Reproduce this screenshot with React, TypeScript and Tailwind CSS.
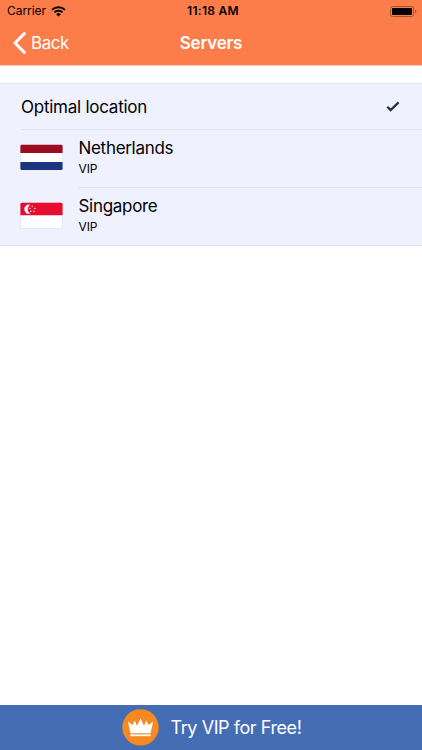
import React from 'react';

type ServerRowProps = {
    name: string;
    plan: string;
    flag: React.ReactNode;
    last?: boolean;
};

const StatusBar = () => (
    <div className="grid h-[22px] grid-cols-3 items-center pl-[7px] pr-[5px] text-black">
        <div className="flex items-center gap-[5px]">
            <span className="text-[12px] leading-[22px] tracking-[-0.05px]">Carrier</span>
            <svg width="15" height="11" viewBox="0 0 15 11">
                <path d="M7.5 10.6 5.2 8.2a3.3 3.3 0 0 1 4.6 0Z" fill="#000" />
                <path d="M3.4 6.4a5.9 5.9 0 0 1 8.2 0" fill="none" stroke="#000" strokeWidth="1.8" />
                <path d="M1 3.9a9.3 9.3 0 0 1 13 0" fill="none" stroke="#000" strokeWidth="1.8" />
            </svg>
        </div>
        <span className="pl-[2px] text-center text-[12px] font-semibold leading-[22px] tracking-[0.3px]">11:18 AM</span>
        <svg className="justify-self-end" width="27" height="11" viewBox="0 0 27 11">
            <rect x="0.5" y="0.5" width="23" height="10" rx="2" fill="none" stroke="#a8502f" />
            <rect x="2" y="2" width="20" height="7" rx="0.7" fill="#000" />
            <path d="M25 3.7q1.5.5 1.5 1.8T25 7.3Z" fill="#a8502f" />
        </svg>
    </div>
);

const NavBar = () => (
    <div className="grid h-[42px] grid-cols-3 items-center px-[13px] text-white">
        <div className="flex items-center gap-[5px]">
            <svg width="13" height="22" viewBox="0 0 13 22">
                <path d="M11.3 1.6 2 11l9.3 9.4" fill="none" stroke="#fff" strokeWidth="3" strokeLinecap="round" />
            </svg>
            <span className="text-[17px] leading-[22px] tracking-[-0.45px]">Back</span>
        </div>
        <span className="text-center text-[17px] font-semibold leading-[22px] tracking-[-0.2px]">Servers</span>
    </div>
);

const NetherlandsFlag = () => (
    <svg width="43" height="27" viewBox="0 0 43 27">
        <rect x="0.5" y="0.5" width="42" height="26" rx="1.5" fill="#fff" stroke="#e4e5ee" strokeWidth="0.7" />
        <path d="M.4 9V2Q.4.7 2 .7h39q1.6 0 1.6 1.3v7Z" fill="#9c0b21" />
        <path d="M.4 18v6.7q0 1.3 1.6 1.3h39q1.6 0 1.6-1.3V18Z" fill="#1c3580" />
    </svg>
);

const SingaporeFlag = () => (
    <svg width="43" height="27" viewBox="0 0 43 27">
        <rect x="0.5" y="0.5" width="42" height="26" rx="1.5" fill="#fff" stroke="#e1e2eb" strokeWidth="0.8" />
        <path d="M.4 13.3V2.2Q.4.7 2 .7h39q1.6 0 1.6 1.5v11.1Z" fill="#e60d2e" />
        <path d="M10.2 2.8A4.6 4.6 0 1 0 10.2 11.6 5.2 5.2 0 0 1 10.2 2.8Z" fill="#fff" />
        <g fill="#fff">
            <circle cx="12.2" cy="4.4" r="0.7" />
            <circle cx="9.9" cy="6.4" r="0.7" />
            <circle cx="14.8" cy="6.4" r="0.7" />
            <circle cx="10.8" cy="9.3" r="0.7" />
            <circle cx="13.9" cy="9.3" r="0.7" />
        </g>
    </svg>
);

const ServerRow = ({ name, plan, flag, last }: ServerRowProps) => (
    <div className={`flex pl-[20px] ${last ? 'h-[57px]' : 'h-[58px]'}`}>
        <div className="w-[58px] shrink-0 pt-[14px]">{flag}</div>
        <div className={`flex-1 pt-[7px] ${last ? '' : 'border-b border-[#e1e3ee]'}`}>
            <p className="pl-[0.5px] text-[17px] leading-[22px] tracking-[-0.3px]">{name}</p>
            <p className="pl-[0.5px] text-[12px] leading-[20px] tracking-[-0.1px]">{plan}</p>
        </div>
    </div>
);

const App = () => {
    return (
        <div className="flex h-screen flex-col overflow-hidden bg-white font-['Inter',sans-serif] text-black">
            <header className="h-[66px] shrink-0 border-b border-[#fcc8b5] bg-[#fc7d4a]">
                <StatusBar />
                <NavBar />
            </header>

            <main className="flex-1 pt-[17px]">
                <div className="border-y border-[#dfe1eb] bg-[#eff1ff]">
                    <div className="pl-[21px]">
                        <div className="flex h-[46px] items-center justify-between border-b border-[#e1e3ee] pr-[22px]">
                            <span className="pt-px text-[17px] leading-[22px] tracking-[-0.25px]">Optimal location</span>
                            <svg width="14" height="11" viewBox="0 0 14 11">
                                <path d="m1.3 5.8 3.3 3.3 8-7.7" fill="none" stroke="#26313f" strokeWidth="2.2" />
                            </svg>
                        </div>
                    </div>
                    <ServerRow name="Netherlands" plan="VIP" flag={<NetherlandsFlag />} />
                    <ServerRow name="Singapore" plan="VIP" flag={<SingaporeFlag />} last />
                </div>
            </main>

            <footer className="flex h-[45px] shrink-0 items-center justify-center gap-[12px] bg-[#456db4] pl-px text-white">
                <svg width="37" height="37" viewBox="0 0 37 37">
                    <circle cx="18.5" cy="18.4" r="18.2" fill="#f68920" />
                    <path d="m5.9 12.6 4.6 3.3 2.200-4.400 2.300 5.300 3.500-7.200 3.500 7.200 2.300-5.300 2.200 4.400 4.600-3.300-2.500 11.600H8.400Z" fill="#fff" />
                    <path d="M8.4 25.4h20.2v1.800H8.400Z" fill="#fff" />
                </svg>
                <span className="text-[18px] leading-[22px] tracking-[-0.43px]">Try VIP for Free!</span>
            </footer>
        </div>
    );
};

export default App;
